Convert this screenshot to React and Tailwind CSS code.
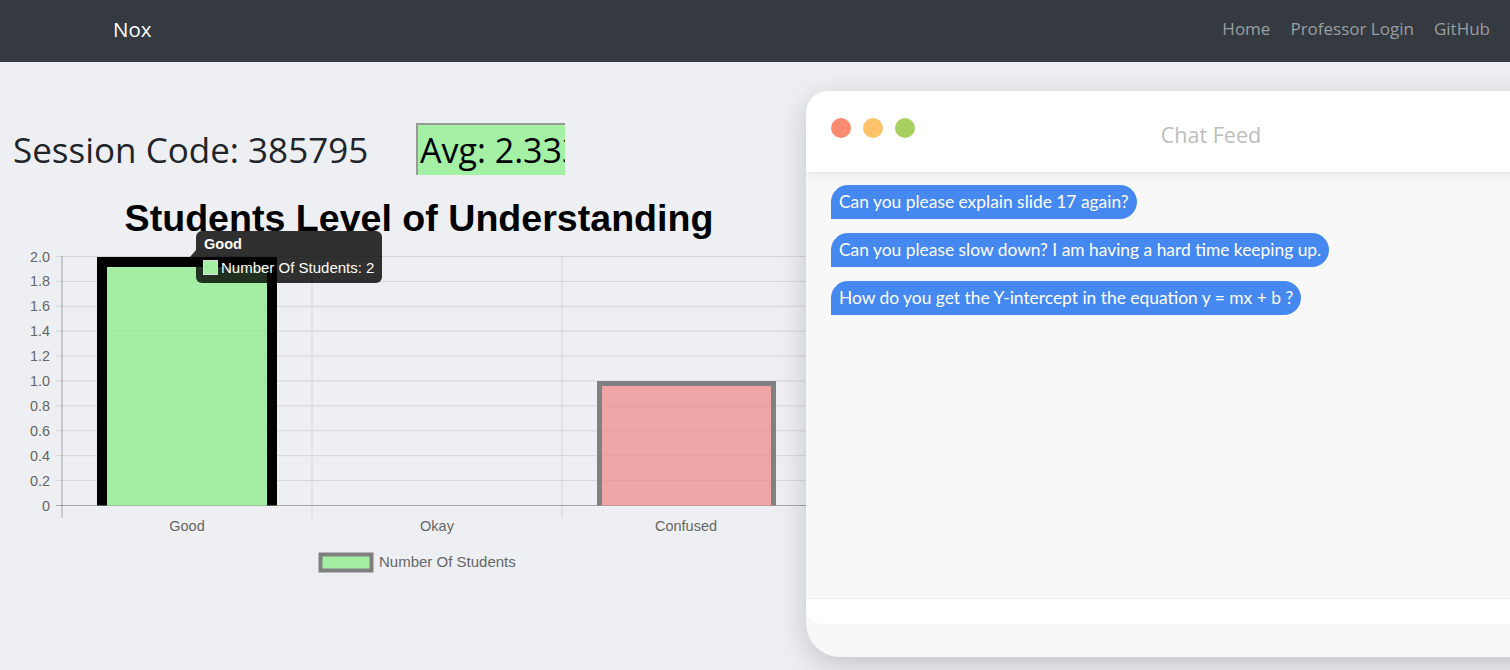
import React from "react";

const navLinks = ["Home", "Professor Login", "GitHub"];

const messages = [
  "Can you please explain slide 17 again?",
  "Can you please slow down? I am having a hard time keeping up.",
  "How do you get the Y-intercept in the equation y = mx + b ?",
];

const yTicks = ["0", "0.2", "0.4", "0.6", "0.8", "1.0", "1.2", "1.4", "1.6", "1.8", "2.0"];
const categories = [
  { label: "Good", x: 187 },
  { label: "Okay", x: 437 },
  { label: "Confused", x: 686 },
];

const ZERO = 505.5;
const STEP = 24.9;

const Chart = () => {
  return (
    <svg
      width="812"
      height="390"
      viewBox="0 190 812 390"
      className="block"
      style={{ fontFamily: '"Liberation Sans", Arial, sans-serif' }}
    >
      <text x="419" y="231" textAnchor="middle" fontSize="37.6" fontWeight="bold" fill="#000">
        Students Level of Understanding
      </text>

      {/* grid */}
      {yTicks.map((t, i) => {
        const y = ZERO - i * STEP;
        return (
          <g key={t}>
            <line
              x1="56"
              x2="812"
              y1={y}
              y2={y}
              stroke={i === 0 ? "rgba(0,0,0,0.3)" : "rgba(0,0,0,0.1)"}
              strokeWidth="1"
            />
            <text x="50" y={y + 5} textAnchor="end" fontSize="14.4" fill="#666">
              {t}
            </text>
          </g>
        );
      })}
      {[62, 312, 562, 811.5].map((x, i) => (
        <line
          key={x}
          x1={x}
          x2={x}
          y1="256"
          y2="518"
          stroke={i === 0 ? "rgba(0,0,0,0.3)" : "rgba(0,0,0,0.1)"}
          strokeWidth="1"
        />
      ))}

      {/* bars */}
      <rect x="97" y="257" width="180" height="248.5" fill="#90ee90" fillOpacity="0.8" />
      <path d="M102 505.5 V262 H272 V505.5" fill="none" stroke="#000" strokeWidth="10" />
      <rect x="597" y="381" width="179" height="124.5" fill="#f08080" fillOpacity="0.667" />
      <path d="M599.5 505.5 V383.5 H773.5 V505.5" fill="none" stroke="#808080" strokeWidth="5" />

      {categories.map((c) => (
        <text key={c.label} x={c.x} y="531" textAnchor="middle" fontSize="14.5" fill="#666">
          {c.label}
        </text>
      ))}

      {/* legend */}
      <rect x="320.5" y="554.5" width="51" height="16" fill="#a4eea4" stroke="#808080" strokeWidth="4" />
      <text x="379" y="567" fontSize="15" fill="#666">
        Number Of Students
      </text>

      {/* tooltip */}
      <path d="M196 250 L190 257 L196 264 Z" fill="rgba(0,0,0,0.8)" />
      <rect x="196" y="231" width="186" height="52" rx="6" fill="rgba(0,0,0,0.8)" />
      <text x="204" y="249" fontSize="14.5" fontWeight="bold" fill="#fff">
        Good
      </text>
      <rect x="203.5" y="260.5" width="14" height="14" fill="#a4eea4" stroke="#ddd" strokeWidth="1" />
      <text x="221" y="273" fontSize="15" fill="#fff">
        Number Of Students: 2
      </text>
    </svg>
  );
};

const ChatWindow = () => {
  return (
    <div className="absolute left-[806px] top-[29px] w-[820px] h-[566px] flex flex-col bg-[#f8f8f8] rounded-t-[22px] rounded-bl-[34px] shadow-[0_8px_30px_rgba(0,0,0,0.18)] overflow-hidden">
      {/* header */}
      <div className="relative h-[81px] shrink-0 bg-white flex items-center pl-[25px] shadow-[0_4px_8px_rgba(0,0,0,0.06)] z-10">
        <div className="flex gap-[12px] mb-[7px]">
          <span className="w-[20px] h-[20px] rounded-full bg-[#f98b71]" />
          <span className="w-[20px] h-[20px] rounded-full bg-[#fec26a]" />
          <span className="w-[20px] h-[20px] rounded-full bg-[#a6d161]" />
        </div>
        <p className="absolute left-0 w-[810px] top-[29px] text-center text-[21.5px] leading-[30px] text-[#bdbdbd] font-['Open_Sans',sans-serif]">
          Chat Feed
        </p>
      </div>

      {/* messages */}
      <div className="flex-1 flex flex-col items-start gap-[14px] pt-[13px] pl-[25px] font-['Lato',sans-serif]">
        {messages.map((m) => (
          <p
            key={m}
            className="h-[34px] px-[8px] flex items-center bg-[#4589f0] text-white text-[17.4px] rounded-[17px] rounded-bl-none"
          >
            {m}
          </p>
        ))}
      </div>

      {/* input area */}
      <div className="h-[26px] shrink-0 bg-white border-t border-[#eeeeee] rounded-bl-[16px]" />
      <div className="h-[33px] shrink-0" />
    </div>
  );
};

const App = () => {
  return (
    <div className="w-[1510px] h-[670px] overflow-hidden bg-[#eeeff3] flex flex-col">
      {/* Navbar */}
      <nav className="h-[62px] shrink-0 bg-[#343a40] flex items-center justify-between pl-[113px] pr-[20px] font-['Open_Sans',sans-serif]">
        <span className="text-white text-[20.5px] mb-[4px]">Nox</span>
        <div className="flex gap-[20px] mb-[4px]">
          {navLinks.map((l) => (
            <span key={l} className="text-[#9a9da1] text-[17px]">
              {l}
            </span>
          ))}
        </div>
      </nav>

      {/* Main */}
      <div className="relative flex-1">
        <div className="flex items-center mt-[61px] h-[52px]">
          <span className="w-[416px] pl-[13px] text-[35px] text-[#212529] font-['Open_Sans',sans-serif] leading-none">
            Session Code: 385795
          </span>
          <div className="w-[149px] h-[52px] bg-[#a4f0a4] border-t-2 border-l-2 border-[#999999] overflow-hidden flex items-center pl-[2px]">
            <span className="text-[34px] text-black whitespace-nowrap font-['Open_Sans',sans-serif] leading-none">
              Avg: 2.3333333
            </span>
          </div>
        </div>
        <div className="mt-[15px]">
          <Chart />
        </div>
        <ChatWindow />
      </div>
    </div>
  );
};

export default App;
